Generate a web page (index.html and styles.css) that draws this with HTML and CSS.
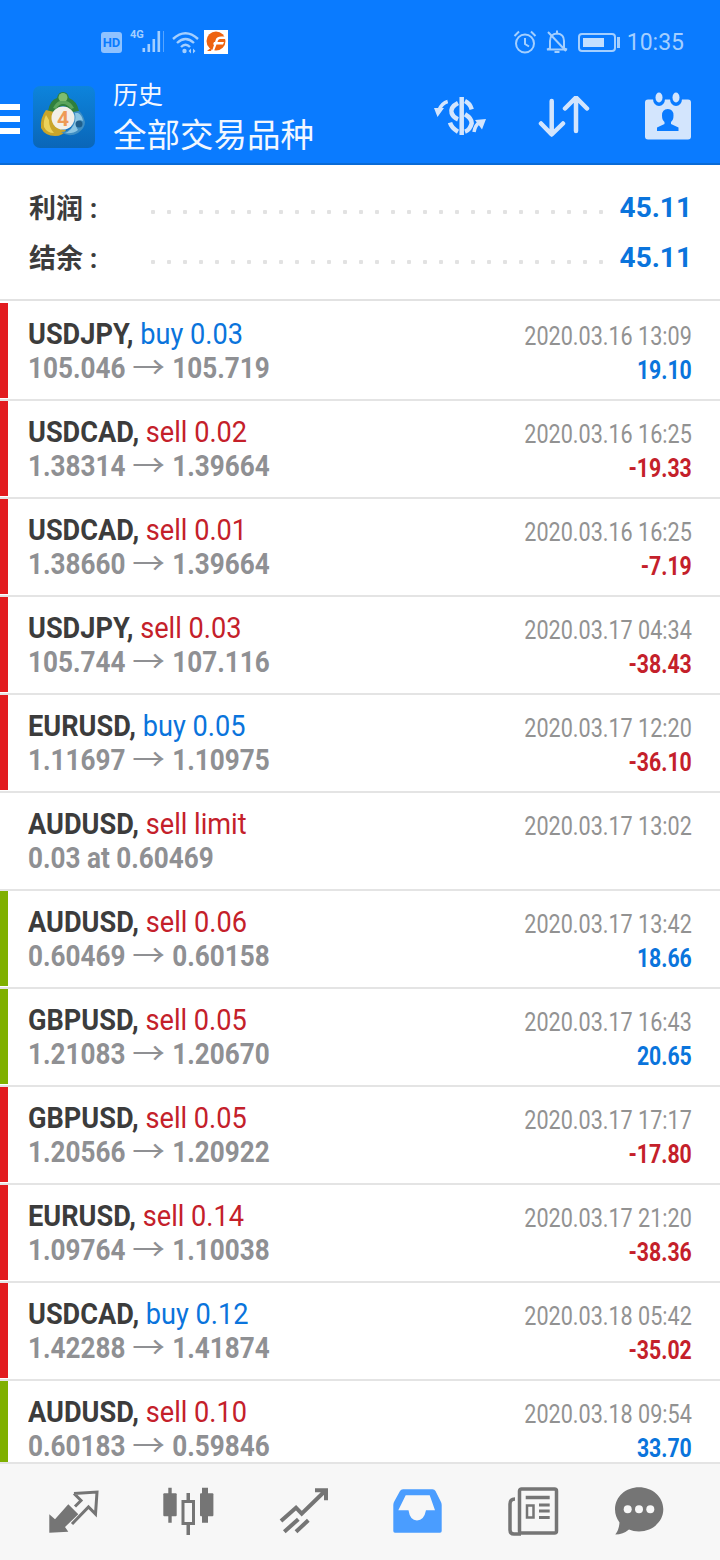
FILE: index.html
```html
<!DOCTYPE html>
<html lang="zh">
<head>
  <meta charset="UTF-8">
  <title>历史</title>
  <link rel="stylesheet" href="styles.css">
</head>
<body>
  <div class="phone">
    <header class="header">
      <div class="status">
        <div class="status-left">
          <span class="hd">HD</span>
          <span class="net">4G</span>
          <svg class="signal" width="24" height="24" viewBox="0 0 24 24">
            <rect x="0.5" y="18" width="2.6" height="4"/>
            <rect x="5.5" y="14" width="2.6" height="8"/>
            <rect x="10.5" y="9" width="2.6" height="13"/>
            <rect x="15.5" y="1" width="2.6" height="21"/>
            <rect x="21" y="1" width="1" height="21" opacity="0.5"/>
          </svg>
          <svg class="wifi" width="27" height="24" viewBox="0 0 27 24">
            <path d="M1 9Q13.500 -2.500 26 9M5 13Q13.500 5 22 13M9 17Q13.500 12.500 18 17" fill="none" stroke="#a4cfff" stroke-width="2.4"/>
            <circle cx="12.500" cy="21" r="2.200" fill="#a4cfff"/>
            <path d="M19 18.500L16.500 21L19 23.500ZM21 18.500L23.500 21L21 23.500Z" fill="#a4cfff"/>
          </svg>
          <svg class="app" width="24" height="24" viewBox="0 0 24 24">
            <rect width="24" height="24" fill="#fff"/>
            <circle cx="12" cy="11" r="9.500" fill="#ee6310"/>
            <path d="M3 21L9 16L7 21Z" fill="#ee6310"/>
            <path d="M8 21L12 9Q13 6.500 17 6.500L22 6.500L21 9L16 9Q14.500 9 14 10.500L10 21ZM10 12L20 12L19 14.500L9 14.500Z" fill="#fff"/>
          </svg>
        </div>
        <div class="status-right">
          <svg width="24" height="24" viewBox="0 0 24 24" fill="none" stroke="#a4cfff" stroke-width="2">
            <circle cx="12" cy="13.500" r="9"/>
            <path d="M12 8V14L16 16.500M1.500 6L6 1.500M18 1.500L22.500 6"/>
          </svg>
          <svg width="22" height="24" viewBox="0 0 22 24" fill="none" stroke="#a4cfff" stroke-width="2">
            <path d="M4 18.500V11Q4 4 11 3.500Q18 4 18 11V18.500L21 19.500H1L4 18.500Z"/>
            <path d="M11 0.500V3M8.500 22H13.500M2 2L20 21"/>
          </svg>
          <span class="battery"><span class="battery-level"></span></span>
          <span class="time">10:35</span>
        </div>
      </div>
      <div class="toolbar">
        <div class="burger"><span></span><span></span><span></span></div>
        <svg class="logo" width="62" height="62" viewBox="0 0 62 62">
          <defs>
            <linearGradient id="logoBg" x1="0" y1="0" x2="0" y2="1">
              <stop offset="0" stop-color="#0d84dc"/>
              <stop offset="1" stop-color="#0a66b8"/>
            </linearGradient>
          </defs>
          <rect width="62" height="62" rx="7" fill="url(#logoBg)"/>
          <path d="M15 25Q17 14 24 12Q25 6 30 6Q35 6 36 12Q44 15 46 25L39 27Q35 20 30 20Q25 20 21 27Z" fill="#2f7f3c"/>
          <circle cx="30" cy="11.500" r="4.500" fill="#7fbd6f"/>
          <path d="M20 22Q23 16 27 15L33 15Q38 16 41 22L38 23Q34 18 30 18Q26 18 23 23Z" fill="#5aa45c"/>
          <path d="M13 24Q7 32 8 42Q12 50 22 50Q30 50 33 44Q24 44 20 36Q18 30 21 26Z" fill="#c9a52a"/>
          <path d="M13 29Q10 35 11 41Q14 47 21 47Q16 42 16 34Z" fill="#ecd25a"/>
          <path d="M40 26Q43 34 38 42Q34 46 28 46Q36 52 45 47Q52 42 52 36Q50 28 46 25Z" fill="#3f8fc4"/>
          <path d="M32 47Q40 48 45 44Q42 40 44 36Q47 33 50 35Q49 29 45 27L42 27Q44 36 38 43Q35 46 32 47Z" fill="#8cc6e4"/>
          <circle cx="46" cy="38" r="3.500" fill="#1f5f8c"/>
          <circle cx="30" cy="32" r="11.500" fill="#f2efe9"/>
          <text class="logo-four" x="30" y="39.500" text-anchor="middle">4</text>
        </svg>
        <div class="title">
          <div class="title-small">历史</div>
          <div class="title-big">全部交易品种</div>
        </div>
        <div class="actions">
          <svg width="54" height="42" viewBox="0 0 54 42" fill="none" stroke="#d3e5fd" stroke-width="4.500">
            <path d="M28.700 1V39"/>
            <path d="M25 7Q17 11 18.700 17.300Q20 21.300 25 23.300M32 5Q37 7.300 38.700 13.300M32 18.300Q38.700 22.300 38.700 27.300Q37 34 32 35.700M17 26.700Q18.700 32.300 25 35.700"/>
            <path d="M14.700 5.500Q9 7 6 14M41 36Q42 29 47 26" stroke-width="3.500"/>
            <path d="M1 12L11 12L4.500 21ZM53 23L42 24L49 33.500Z" fill="#d3e5fd" stroke="none"/>
          </svg>
          <svg width="52" height="42" viewBox="0 0 52 42" fill="none" stroke="#d3e5fd" stroke-width="4.500" stroke-linecap="round" stroke-linejoin="round">
            <path d="M13.700 5V38M3 27.500L13.700 38.500L25 27.500"/>
            <path d="M38 35V2M27 12.500L38 1.500L49 12.500"/>
          </svg>
          <svg class="calendar" width="48" height="48" viewBox="0 0 48 48">
            <rect x="1" y="7.500" width="46" height="40" rx="3" fill="#d3e5fd"/>
            <ellipse cx="15" cy="7" rx="6" ry="7" fill="#0a7bff"/>
            <ellipse cx="32" cy="7" rx="6" ry="7" fill="#0a7bff"/>
            <ellipse cx="15" cy="5.500" rx="3.500" ry="5" fill="#d3e5fd"/>
            <ellipse cx="32" cy="5.500" rx="3.500" ry="5" fill="#d3e5fd"/>
            <path d="M23.800 17Q29.500 17 29.500 23.500Q29.500 28 27 30V32L34.500 35.500V39H13V35.500L20.500 32V30Q18 28 18 23.500Q18 17 23.800 17Z" fill="#0a7bff"/>
          </svg>
        </div>
      </div>
    </header>

    <section class="summary">
      <div class="sum-row">
        <span class="sum-label">利润 :</span>
        <span class="sum-dots"></span>
        <span class="sum-value">45.11</span>
      </div>
      <div class="sum-row">
        <span class="sum-label">结余 :</span>
        <span class="sum-dots"></span>
        <span class="sum-value">45.11</span>
      </div>
    </section>

    <main class="list">
      <div class="row">
        <div class="bar red"></div>
        <div class="left">
          <div class="line"><b>USDJPY,</b> <span class="buy">buy 0.03</span></div>
          <div class="line price">105.046 <i>→</i> 105.719</div>
        </div>
        <div class="right">
          <div class="date">2020.03.16 13:09</div>
          <div class="val buy">19.10</div>
        </div>
      </div>
      <div class="row">
        <div class="bar red"></div>
        <div class="left">
          <div class="line"><b>USDCAD,</b> <span class="sell">sell 0.02</span></div>
          <div class="line price">1.38314 <i>→</i> 1.39664</div>
        </div>
        <div class="right">
          <div class="date">2020.03.16 16:25</div>
          <div class="val sell">-19.33</div>
        </div>
      </div>
      <div class="row">
        <div class="bar red"></div>
        <div class="left">
          <div class="line"><b>USDCAD,</b> <span class="sell">sell 0.01</span></div>
          <div class="line price">1.38660 <i>→</i> 1.39664</div>
        </div>
        <div class="right">
          <div class="date">2020.03.16 16:25</div>
          <div class="val sell">-7.19</div>
        </div>
      </div>
      <div class="row">
        <div class="bar red"></div>
        <div class="left">
          <div class="line"><b>USDJPY,</b> <span class="sell">sell 0.03</span></div>
          <div class="line price">105.744 <i>→</i> 107.116</div>
        </div>
        <div class="right">
          <div class="date">2020.03.17 04:34</div>
          <div class="val sell">-38.43</div>
        </div>
      </div>
      <div class="row">
        <div class="bar red"></div>
        <div class="left">
          <div class="line"><b>EURUSD,</b> <span class="buy">buy 0.05</span></div>
          <div class="line price">1.11697 <i>→</i> 1.10975</div>
        </div>
        <div class="right">
          <div class="date">2020.03.17 12:20</div>
          <div class="val sell">-36.10</div>
        </div>
      </div>
      <div class="row">
        <div class="bar"></div>
        <div class="left">
          <div class="line"><b>AUDUSD,</b> <span class="sell">sell limit</span></div>
          <div class="line price">0.03 at 0.60469</div>
        </div>
        <div class="right">
          <div class="date">2020.03.17 13:02</div>
        </div>
      </div>
      <div class="row">
        <div class="bar green"></div>
        <div class="left">
          <div class="line"><b>AUDUSD,</b> <span class="sell">sell 0.06</span></div>
          <div class="line price">0.60469 <i>→</i> 0.60158</div>
        </div>
        <div class="right">
          <div class="date">2020.03.17 13:42</div>
          <div class="val buy">18.66</div>
        </div>
      </div>
      <div class="row">
        <div class="bar green"></div>
        <div class="left">
          <div class="line"><b>GBPUSD,</b> <span class="sell">sell 0.05</span></div>
          <div class="line price">1.21083 <i>→</i> 1.20670</div>
        </div>
        <div class="right">
          <div class="date">2020.03.17 16:43</div>
          <div class="val buy">20.65</div>
        </div>
      </div>
      <div class="row">
        <div class="bar red"></div>
        <div class="left">
          <div class="line"><b>GBPUSD,</b> <span class="sell">sell 0.05</span></div>
          <div class="line price">1.20566 <i>→</i> 1.20922</div>
        </div>
        <div class="right">
          <div class="date">2020.03.17 17:17</div>
          <div class="val sell">-17.80</div>
        </div>
      </div>
      <div class="row">
        <div class="bar red"></div>
        <div class="left">
          <div class="line"><b>EURUSD,</b> <span class="sell">sell 0.14</span></div>
          <div class="line price">1.09764 <i>→</i> 1.10038</div>
        </div>
        <div class="right">
          <div class="date">2020.03.17 21:20</div>
          <div class="val sell">-38.36</div>
        </div>
      </div>
      <div class="row">
        <div class="bar red"></div>
        <div class="left">
          <div class="line"><b>USDCAD,</b> <span class="buy">buy 0.12</span></div>
          <div class="line price">1.42288 <i>→</i> 1.41874</div>
        </div>
        <div class="right">
          <div class="date">2020.03.18 05:42</div>
          <div class="val sell">-35.02</div>
        </div>
      </div>
      <div class="row">
        <div class="bar green"></div>
        <div class="left">
          <div class="line"><b>AUDUSD,</b> <span class="sell">sell 0.10</span></div>
          <div class="line price">0.60183 <i>→</i> 0.59846</div>
        </div>
        <div class="right">
          <div class="date">2020.03.18 09:54</div>
          <div class="val buy">33.70</div>
        </div>
      </div>
    </main>

    <nav class="nav">
      <svg width="50" height="50" viewBox="0 0 50 50">
        <path d="M0.300 45.700V27.300L6 32.300L19.300 17.300L29.300 27.300L16 40L19.300 44.700Z" fill="#757575"/>
        <path d="M25 6.500L48 5L46.500 27L39.500 20L23 37M25 6.500L32 13.500L26 19.500" fill="none" stroke="#757575" stroke-width="3"/>
      </svg>
      <svg width="52" height="50" viewBox="0 0 52 50">
        <path d="M5.300 0.700H8.700V35.700H5.300ZM39 0.700H45V35.700H39ZM23.500 6H27V48H23.500Z" fill="#757575"/>
        <rect x="0.300" y="6.300" width="13.400" height="23" rx="1" fill="#757575"/>
        <rect x="37" y="6.300" width="13.400" height="23" rx="1" fill="#757575"/>
        <rect x="20" y="14.500" width="10.500" height="22" fill="#f7f7f7" stroke="#757575" stroke-width="3"/>
      </svg>
      <svg width="50" height="50" viewBox="0 0 50 50" fill="none" stroke="#757575" stroke-width="4">
        <path d="M2 34L17 20.700L22.700 26.700L46 4M36 3.300H47V13.300"/>
        <path d="M5.300 44.700L19.300 32.300M17 44.700L29.300 33.300"/>
      </svg>
      <svg width="50" height="50" viewBox="0 0 50 50">
        <path d="M0.300 18Q0.300 16 1.500 14L7 4Q8 2.300 10 2.300H39.500Q41.500 2.300 42.500 4L47.500 14Q48.700 16 48.700 18V44Q48.700 45.700 47 45.700H2Q0.300 45.700 0.300 44Z" fill="#4a9dff"/>
        <path d="M12.700 8.300H36.700L42 23.300H33Q31 33.500 24 33.500Q17 33.500 15.500 23.300H5.300Z" fill="#f7f7f7"/>
      </svg>
      <svg width="52" height="50" viewBox="0 0 52 50" fill="none" stroke="#757575">
        <rect x="12.500" y="2" width="37" height="44" rx="2" stroke-width="3.500"/>
        <path d="M8 12Q3 12 3 17V43Q3 47 7 47H14" stroke-width="3.500"/>
        <path d="M18.700 10.500H42.700" stroke-width="3.500"/>
        <rect x="20" y="18.500" width="6.500" height="12" stroke-width="2.500"/>
        <path d="M32 18H42.700M32 24H42.700M32 30.500H42.700" stroke-width="3.200"/>
      </svg>
      <svg class="nav-last" width="50" height="50" viewBox="0 0 50 50">
        <path d="M24 0.300C37 0.300 48.300 9.500 48.300 22.300C48.300 35 37 44.500 24 44.500C20 44.500 17 43.800 14 42.500Q8 47.500 0.300 47.500Q4 43 4.500 35.500Q0 29.500 0 22.300C0 9.500 11 0.300 24 0.300Z" fill="#757575"/>
        <circle cx="12.700" cy="22.300" r="4" fill="#f7f7f7"/>
        <circle cx="24" cy="22.300" r="4" fill="#f7f7f7"/>
        <circle cx="35.300" cy="22.300" r="4" fill="#f7f7f7"/>
      </svg>
    </nav>
  </div>
</body>
</html>
```

FILE: styles.css
```css
* {
  box-sizing: border-box;
}
html, body {
  margin: 0;
  height: 100%;
}
body {
  font-family: Roboto, "Noto Sans CJK SC", sans-serif;
  background: white;
}
svg {
  display: block;
  flex: none;
}
.phone {
  width: 720px;
  height: 1560px;
  display: flex;
  flex-direction: column;
  overflow: hidden;
}

/* top blue area */
.header {
  height: 165px;
  flex: none;
  background: #0a7bff;
  border-bottom: 2px solid #0a6bd6;
}
.status {
  height: 84px;
  display: flex;
  align-items: center;
  justify-content: space-between;
  padding: 0 36px 0 101px;
  color: #a4cfff;
}
.status-left, .status-right {
  display: flex;
  align-items: center;
}
.signal {
  fill: #a4cfff;
  margin-left: -1px;
}
.hd {
  width: 21px;
  height: 21px;
  border-radius: 3px;
  background: #8fc2ff;
  color: #0a7bff;
  font-size: 13px;
  font-weight: bold;
  line-height: 21px;
  text-align: center;
}
.net {
  align-self: flex-start;
  margin: -1px 0 0 8px;
  width: 13px;
  font-size: 11px;
  font-weight: bold;
  line-height: 12px;
}
.wifi {
  margin: 0 5px 0 6px;
}
.status-right svg {
  margin-right: 9px;
}
.battery {
  position: relative;
  width: 38px;
  height: 19px;
  margin: 0 11px 0 1px;
  padding: 3px;
  border: 2px solid #a4cfff;
  border-radius: 4px;
}
.battery::after {
  content: "";
  position: absolute;
  left: 37px;
  top: 2px;
  width: 3px;
  height: 11px;
  background: #a4cfff;
}
.battery-level {
  display: block;
  width: 21px;
  height: 100%;
  background: #c3dfff;
}
.time {
  font-size: 23px;
}
.toolbar {
  display: flex;
  align-items: flex-start;
}
.burger {
  width: 20px;
  margin: 20px 13px 0 0;
  display: flex;
  flex-direction: column;
  gap: 6px;
}
.burger span {
  height: 6px;
  background: white;
}
.logo {
  margin-top: 2px;
}
.logo-four {
  font-size: 21px;
  font-weight: bold;
  fill: #ee9a55;
}
.title {
  margin-left: 18px;
  color: #f2f7ff;
}
.title-small {
  font-size: 25px;
  line-height: 24px;
}
.title-big {
  font-size: 33.500px;
  line-height: 36px;
  margin-top: 10px;
}
.actions {
  margin-left: auto;
  padding-right: 28px;
  display: flex;
  gap: 51px;
  margin-top: 8px;
}
.actions svg:nth-child(1), .actions svg:nth-child(2) {
  margin-top: 4px;
}
.calendar {
  margin-left: 3px;
}

/* profit and balance */
.summary {
  flex: none;
  height: 136px;
  padding: 16px 28px 0 29px;
  background: white;
  border-bottom: 2px solid #e2e2e2;
}
.sum-row {
  height: 50px;
  display: flex;
  align-items: center;
}
.sum-label {
  width: 122px;
  font-size: 27px;
  font-weight: bold;
  color: #3c3c3c;
}
.sum-dots {
  width: 456px;
  height: 4px;
  margin-top: 12px;
  background: radial-gradient(circle, #e2e2e2 2px, transparent 2.500px) -6px 0 / 16px 4px repeat-x;
}
.sum-value {
  margin-left: auto;
  margin-top: 2px;
  font-size: 28px;
  font-weight: bold;
  color: #0a74dc;
}

/* trades */
.list {
  flex: 1;
  min-height: 0;
  padding-top: 2px;
  overflow: hidden;
}
.row {
  height: 98px;
  display: flex;
  border-bottom: 2px solid #e4e4e4;
  background: white;
}
.bar {
  width: 8px;
  flex: none;
  margin-bottom: 1px;
}
.bar.red {
  background: #e21b1f;
}
.bar.green {
  background: #7fb000;
}
.left {
  padding: 14px 0 0 20px;
}
.line {
  font-size: 30px;
  line-height: 34px;
  white-space: nowrap;
  transform: scaleX(0.905);
  transform-origin: left;
}
.line b {
  color: #3c3c3c;
}
.price {
  font-weight: bold;
  color: #8f9093;
  transform: scaleX(0.87);
}
.price i {
  display: inline-block;
  width: 39px;
  font-style: normal;
  font-weight: normal;
  text-align: center;
  transform: scaleX(1.25);
}
.right {
  margin-left: auto;
  padding: 16px 28px 0 0;
  text-align: right;
}
.date {
  font-size: 26px;
  line-height: 34px;
  color: #929292;
  white-space: nowrap;
  transform: scaleX(0.83);
  transform-origin: right;
}
.val {
  font-size: 25px;
  font-weight: bold;
  line-height: 36px;
  transform: scaleX(0.85);
  transform-origin: right;
}
.buy {
  color: #0a74dc;
}
.sell {
  color: #c4202a;
}

/* bottom tabs */
.nav {
  height: 98px;
  flex: none;
  display: flex;
  gap: 64px;
  padding: 23px 0 0 49px;
  background: #f7f7f7;
  border-top: 2px solid #e4e4e4;
}
.nav-last {
  margin-left: -8px;
}
```
